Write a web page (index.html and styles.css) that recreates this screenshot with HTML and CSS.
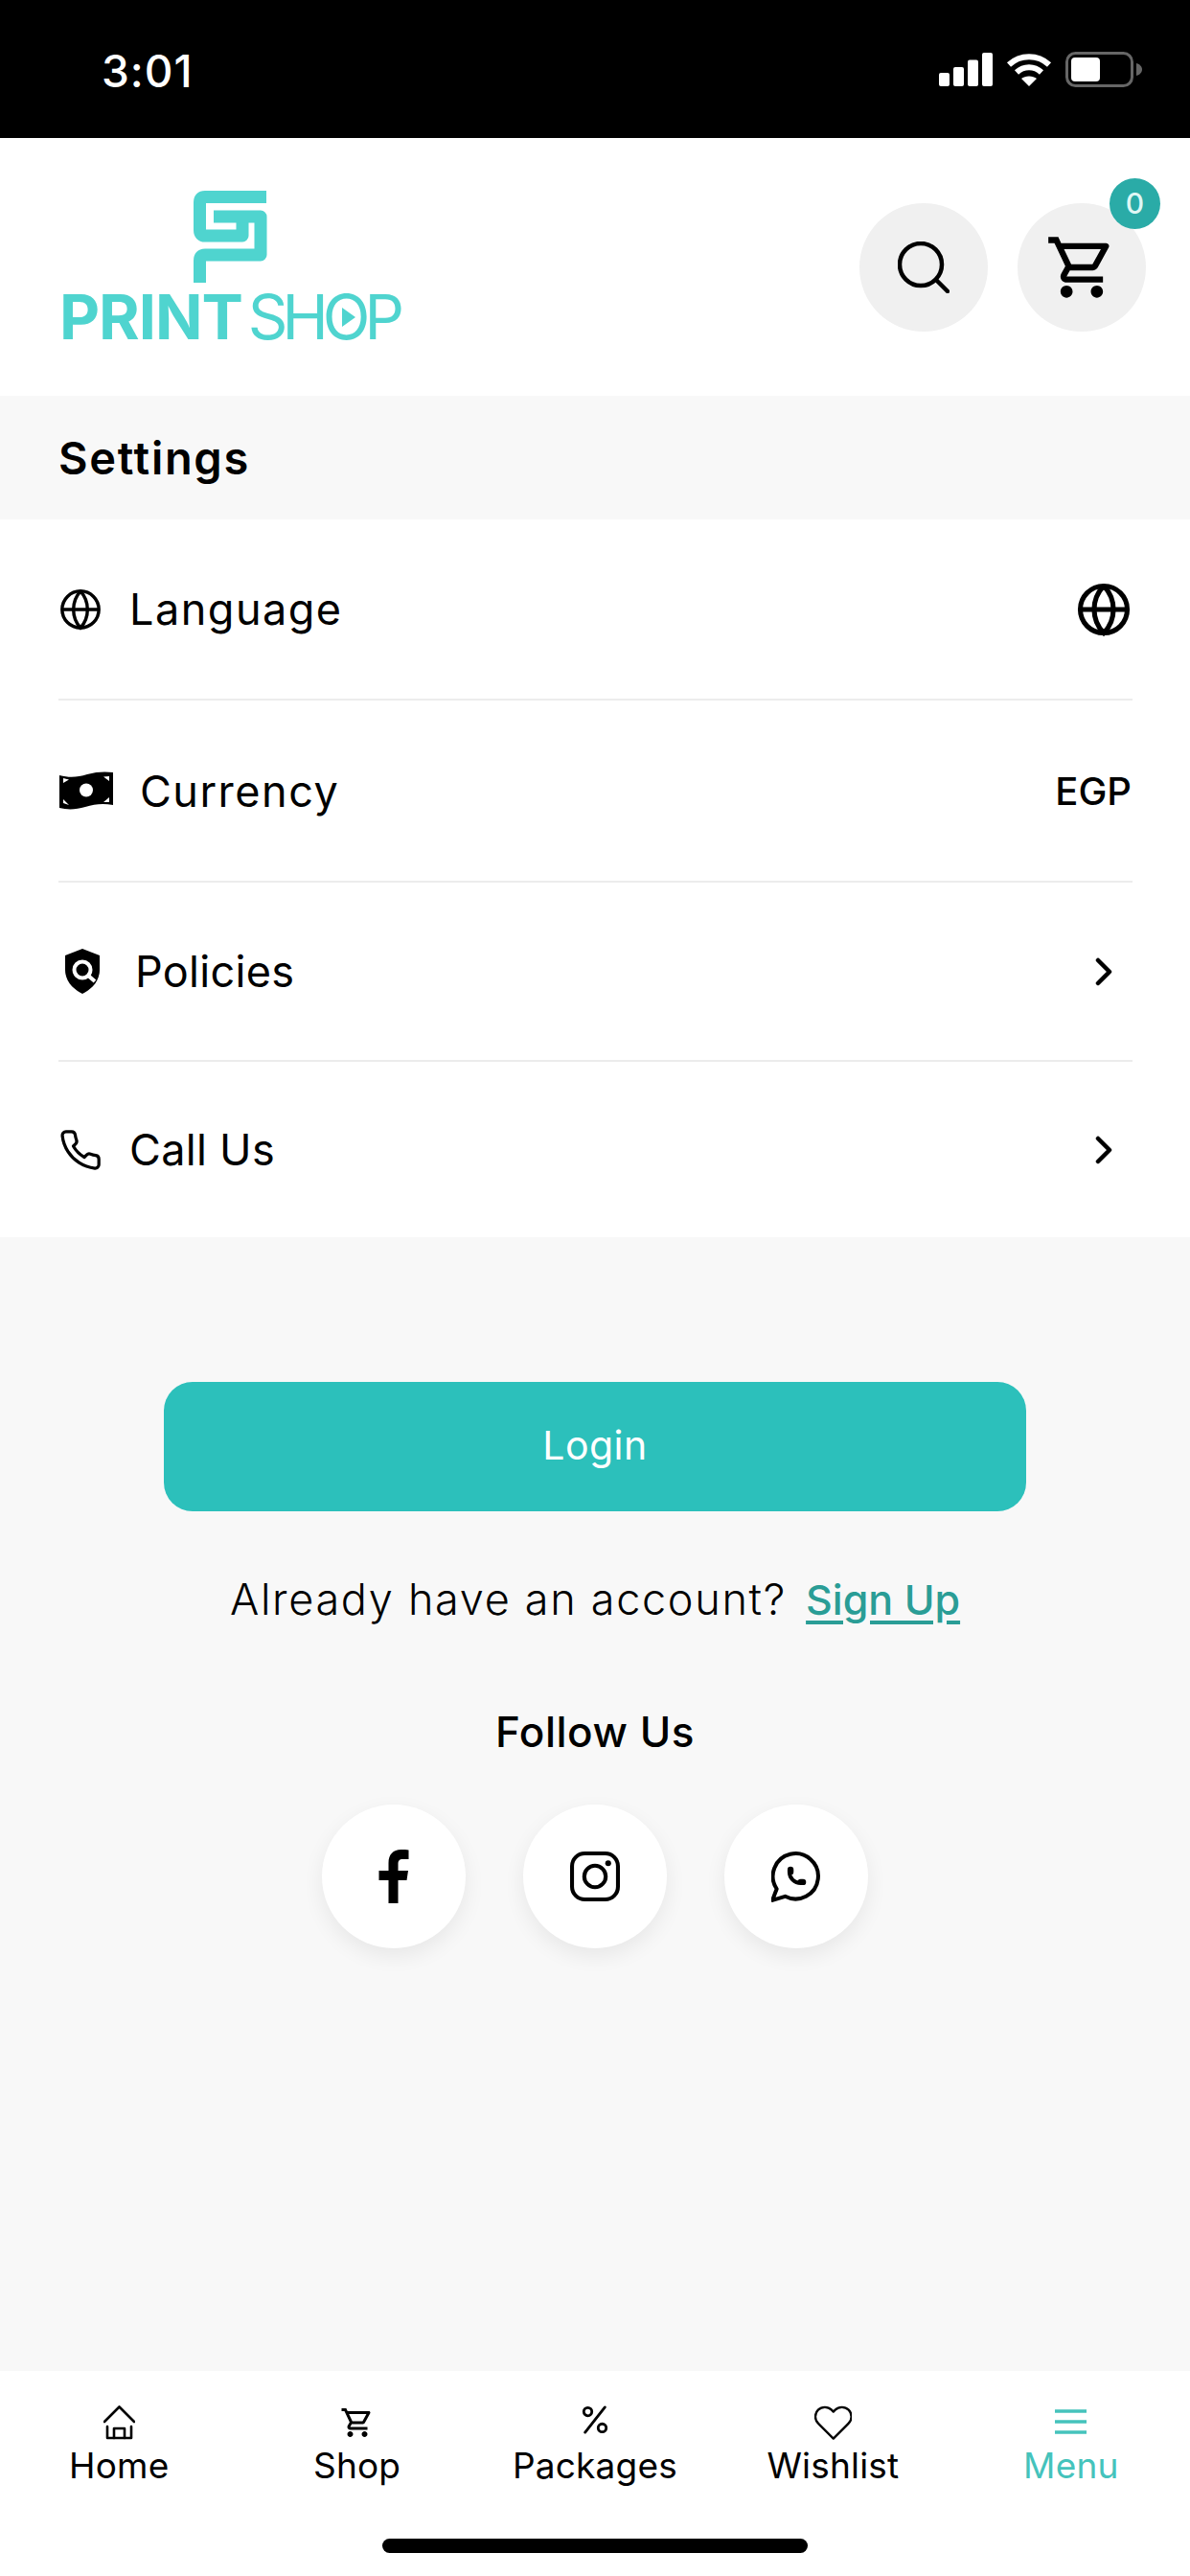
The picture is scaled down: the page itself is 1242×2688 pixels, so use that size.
FILE: index.html
```html
<!DOCTYPE html>
<html lang="en">
<head>
    <meta charset="UTF-8">
    <meta name="viewport" content="width=device-width, initial-scale=1.0">
    <title>Settings - Print Shop</title>
    <link rel="stylesheet" href="styles.css">
</head>
<body>
    <div class="status-bar">
        <span class="time">3:01</span>
        <div class="status-icons">
            <svg class="signal" viewBox="0 0 56 35" fill="#fff">
                <rect x="0" y="21" width="11" height="14" rx="2"/>
                <rect x="15" y="15" width="11" height="20" rx="2"/>
                <rect x="30" y="7.500" width="11" height="27.500" rx="2"/>
                <rect x="45" y="0" width="11" height="35" rx="2"/>
            </svg>
            <svg class="wifi" viewBox="0 0 48 35" fill="none" stroke="#fff" stroke-width="6">
                <path d="M3 12.500C15 1.500 33 1.500 45 12.500"/>
                <path d="M11 20.500C18.500 13.500 29.500 13.500 37 20.500"/>
                <path d="M24 35L16 27C20 23.500 28 23.500 32 27Z" fill="#fff" stroke="none"/>
            </svg>
            <svg class="battery" viewBox="0 0 80 37">
                <rect x="1.500" y="1.500" width="68" height="34" rx="9" fill="none" stroke="#666" stroke-width="3"/>
                <rect x="6" y="6" width="30" height="25" rx="4" fill="#fff"/>
                <path d="M74 12C78 13 80 16 80 18.500C80 21 78 24 74 25Z" fill="#666"/>
            </svg>
        </div>
    </div>

    <header class="header">
        <div class="logo">
            <svg class="logo-mark" viewBox="0 0 100 115" fill="none" stroke="#4fd4cf" stroke-width="13" stroke-linejoin="round">
                <path d="M88 16.500H24Q18.500 16.500 18.500 22V51Q18.500 57 24 57H63V37"/>
                <path d="M33 37H82V77H24Q18.500 77 18.500 83V106"/>
            </svg>
            <div class="logo-text">
                <span class="logo-print">PRINT</span>
                <span class="logo-shop">SH<span class="logo-o">O</span>P</span>
            </div>
        </div>
        <div class="header-actions">
            <button class="round-btn">
                <svg class="icon-search" viewBox="0 0 54 54" fill="none" stroke="#000" stroke-width="4.500" stroke-linecap="round">
                    <circle cx="24" cy="24" r="22"/>
                    <path d="M40 40L52 52"/>
                </svg>
            </button>
            <button class="round-btn cart-btn">
                <svg class="icon-cart" viewBox="0 0 24 24" fill="#000"><path d="M15.55 13c.75 0 1.41-.41 1.75-1.03l3.58-6.49c.37-.66-.11-1.48-.87-1.48H5.21l-.94-2H1v2h2l3.6 7.59-1.35 2.44C4.52 15.37 5.48 17 7 17h12v-2H7l1.100-2h7.450zM6.160 6h12.150l-2.760 5H8.530L6.160 6zM7 18c-1.100 0-1.990.9-1.990 2S5.900 22 7 22s2-.9 2-2-.9-2-2-2zm10 0c-1.100 0-1.990.9-1.990 2s.89 2 1.990 2 2-.9 2-2-.9-2-2-2z"/></svg>
                <span class="badge">0</span>
            </button>
        </div>
    </header>

    <div class="section-title">Settings</div>

    <div class="settings-list">
        <div class="row row-spaced">
            <div class="row-left">
                <svg class="icon-globe" viewBox="0 0 24 24" fill="none" stroke="#000" stroke-width="1.800">
                    <circle cx="12" cy="12" r="10"/>
                    <path d="M2 12h20"/>
                    <path d="M12 2a15 15 0 0 1 0 20a15 15 0 0 1 0-20"/>
                </svg>
                <span>Language</span>
            </div>
            <svg class="icon-globe-big" viewBox="0 0 24 24" fill="none" stroke="#000" stroke-width="2.200">
                <circle cx="12" cy="12" r="10.500"/>
                <path d="M2 12h20"/>
                <path d="M12 1.500a15 15 0 0 1 0 21a15 15 0 0 1 0-21"/>
            </svg>
        </div>
        <div class="row row-spaced">
            <div class="row-left">
                <svg class="icon-money" viewBox="0 0 58 40">
                    <path d="M1 4C12 7 20 6 30 3C40 0 50 0 57 1V35C46 33 38 34 28 37C18 40 9 40 1 38Z" fill="#000"/>
                    <circle cx="29" cy="19.500" r="7" fill="#fff"/>
                    <path d="M5 7L11 8.500L5 12ZM53 5L47 5.500L53 10ZM5 33L11 35L5 29ZM53 32L47 32L53 27Z" fill="#fff"/>
                </svg>
                <span>Currency</span>
            </div>
            <span class="row-value">EGP</span>
        </div>
        <div class="row">
            <div class="row-left">
                <svg class="icon-shield" viewBox="0 0 40 47">
                    <path d="M20 0L38 7V22C38 35 28 43 20 47C12 43 2 35 2 22V7Z" fill="#000"/>
                    <circle cx="20" cy="22" r="8.500" fill="none" stroke="#fff" stroke-width="4"/>
                    <path d="M26 28L33 34" stroke="#fff" stroke-width="4"/>
                </svg>
                <span>Policies</span>
            </div>
            <svg class="icon-chevron" viewBox="0 0 18 30" fill="none" stroke="#000" stroke-width="4.500" stroke-linecap="round" stroke-linejoin="round"><path d="M3 3L15 15L3 27"/></svg>
        </div>
        <div class="row">
            <div class="row-left">
                <svg class="icon-phone" viewBox="0 0 24 24" fill="none" stroke="#000" stroke-width="1.700" stroke-linejoin="round"><path d="M22 16.920v3a2 2 0 0 1-2.180 2 19.790 19.790 0 0 1-8.630-3.070 19.500 19.500 0 0 1-6-6 19.790 19.790 0 0 1-3.070-8.670A2 2 0 0 1 4.110 2h3a2 2 0 0 1 2 1.720 12.840 12.840 0 0 0 .7 2.810 2 2 0 0 1-.45 2.110L8.090 9.910a16 16 0 0 0 6 6l1.270-1.270a2 2 0 0 1 2.110-.45 12.840 12.840 0 0 0 2.810.7A2 2 0 0 1 22 16.920z"/></svg>
                <span>Call Us</span>
            </div>
            <svg class="icon-chevron" viewBox="0 0 18 30" fill="none" stroke="#000" stroke-width="4.500" stroke-linecap="round" stroke-linejoin="round"><path d="M3 3L15 15L3 27"/></svg>
        </div>
    </div>

    <main class="account">
        <button class="login-btn">Login</button>
        <p class="signup-line"><span class="signup-text">Already have an account?</span> <a class="signup-link" href="#">Sign Up</a></p>
        <h3 class="follow-title">Follow Us</h3>
        <div class="social-list">
            <a class="social-btn" href="#">
                <svg class="icon-social" viewBox="0 0 51 56" fill="#000"><path d="M20 56V32H10V22H20V14C20 5 25 0 33 0C36 0 39 0 41 .5V10H35C31 10 30 12 30 15V22H40.500L39 32H30V56Z"/></svg>
            </a>
            <a class="social-btn" href="#">
                <svg class="icon-social" viewBox="0 0 51 51" fill="none" stroke="#000" stroke-width="4">
                    <rect x="2" y="2" width="47" height="47" rx="13"/>
                    <circle cx="25.500" cy="25.500" r="11"/>
                    <circle cx="39" cy="12" r="3" fill="#000" stroke="none"/>
                </svg>
            </a>
            <a class="social-btn" href="#">
                <svg class="icon-social" viewBox="1 1 22 22" fill="none" stroke="#000" stroke-width="1.700" stroke-linecap="round" stroke-linejoin="round">
                    <path d="M1.500 22.500l1.900-5a10 10 0 1 1 3.700 3.300l-5.600 1.700"/>
                    <path d="M9 10a.5.5 0 0 0 1 0v-1a.5.5 0 0 0-1 0v1a5 5 0 0 0 5 5h1a.5.5 0 0 0 0-1h-1a.5.5 0 0 0 0 1"/>
                </svg>
            </a>
        </div>
    </main>

    <nav class="bottom-nav">
        <div class="nav-items">
            <a class="nav-item" href="#">
                <svg class="nav-icon" viewBox="0 0 33 36" fill="none" stroke="#000" stroke-width="2.600" stroke-linecap="round" stroke-linejoin="round">
                    <path d="M1 17L16.500 1.500L32 17"/>
                    <path d="M4 22V34H29V22"/>
                    <path d="M11 34V24H22V34"/>
                </svg>
                <span>Home</span>
            </a>
            <a class="nav-item" href="#">
                <svg class="nav-icon" viewBox="0 0 24 24" fill="#000"><path d="M15.550 13c.75 0 1.410-.41 1.750-1.030l3.580-6.490c.37-.66-.11-1.480-.87-1.480H5.210l-.94-2H1v2h2l3.600 7.590-1.350 2.440C4.520 15.370 5.480 17 7 17h12v-2H7l1.100-2h7.450zM6.160 6h12.150l-2.760 5H8.530L6.160 6zM7 18c-1.100 0-1.990.9-1.990 2S5.900 22 7 22s2-.9 2-2-.9-2-2-2zm10 0c-1.100 0-1.990.9-1.990 2s.89 2 1.990 2 2-.9 2-2-.9-2-2-2z"/></svg>
                <span>Shop</span>
            </a>
            <a class="nav-item" href="#">
                <svg class="nav-icon nav-icon-small" viewBox="0 0 32 32" fill="none" stroke="#000" stroke-width="3" stroke-linecap="round">
                    <circle cx="8" cy="7" r="4.500"/>
                    <circle cx="24" cy="25" r="4.500"/>
                    <path d="M27 2L5 30"/>
                </svg>
                <span>Packages</span>
            </a>
            <a class="nav-item" href="#">
                <svg class="nav-icon" viewBox="1 2 22 20" fill="none" stroke="#000" stroke-width="1.300" stroke-linejoin="round"><path d="M20.840 4.610a5.500 5.500 0 0 0-7.780 0L12 5.670l-1.060-1.060a5.500 5.500 0 0 0-7.780 7.780l1.060 1.060L12 21.230l7.780-7.780 1.060-1.060a5.500 5.500 0 0 0 0-7.780z"/></svg>
                <span>Wishlist</span>
            </a>
            <a class="nav-item active" href="#">
                <svg class="nav-icon" viewBox="0 0 33 36" fill="none" stroke="#45c3bc" stroke-width="3.500"><path d="M0 6H33M0 17H33M0 28H33"/></svg>
                <span>Menu</span>
            </a>
        </div>
        <div class="home-indicator"></div>
    </nav>
</body>
</html>
```

FILE: styles.css
```css
* {
    margin: 0;
    padding: 0;
    box-sizing: border-box;
}

body {
    font-family: Inter, 'Liberation Sans', sans-serif;
    background: #f8f8f8;
    color: #000;
    width: 1242px;
    height: 2688px;
    overflow: hidden;
    display: flex;
    flex-direction: column;
}

a {
    color: inherit;
    text-decoration: none;
}

button {
    border: none;
    font-family: inherit;
}

/* status bar */
.status-bar {
    height: 144px;
    background: #000;
    color: #fff;
    display: flex;
    align-items: center;
    justify-content: space-between;
    padding: 0 50px 0 106px;
    flex-shrink: 0;
}

.time {
    font-size: 46px;
    font-weight: 500;
    letter-spacing: 1px;
    padding-top: 3px;
}

.status-icons {
    display: flex;
    align-items: center;
    gap: 14px;
}

.signal {
    width: 56px;
    height: 35px;
}

.wifi {
    width: 48px;
    height: 35px;
}

.battery {
    width: 80px;
    height: 37px;
}

/* header */
.header {
    height: 269px;
    background: #fff;
    display: flex;
    align-items: center;
    justify-content: space-between;
    padding: 0 46px 0 62px;
    flex-shrink: 0;
}

.logo {
    display: flex;
    flex-direction: column;
    align-items: center;
    width: 354px;
    padding-bottom: 13px;
    color: #4fd4cf;
}

.logo-mark {
    width: 100px;
    height: 115px;
    margin-right: -2px;
}

.logo-text {
    display: flex;
    align-items: center;
    justify-content: space-between;
    width: 100%;
    font-size: 65px;
    line-height: 48px;
    margin-top: 3px;
    white-space: nowrap;
}

.logo-print {
    font-weight: 700;
    letter-spacing: -1px;
}

.logo-shop {
    font-weight: 400;
    letter-spacing: -6px;
}

.logo-o {
    position: relative;
    display: inline-block;
}

.logo-o::after {
    content: "";
    position: absolute;
    left: 20px;
    top: 14px;
    border-left: 14px solid #4fd4cf;
    border-top: 10px solid transparent;
    border-bottom: 10px solid transparent;
}

.header-actions {
    display: flex;
    gap: 31px;
}

.round-btn {
    width: 134px;
    height: 134px;
    border-radius: 50%;
    background: #f0f0f0;
    display: flex;
    align-items: center;
    justify-content: center;
    position: relative;
}

.icon-search {
    width: 54px;
    height: 54px;
}

.icon-cart {
    width: 76px;
    height: 76px;
}

.badge {
    position: absolute;
    top: -26px;
    right: -15px;
    width: 53px;
    height: 53px;
    border-radius: 50%;
    background: #2aaba7;
    color: #dff7f5;
    font-size: 30px;
    font-weight: 500;
    display: flex;
    align-items: center;
    justify-content: center;
}

/* settings list */
.section-title {
    height: 129px;
    display: flex;
    align-items: center;
    padding-left: 61px;
    font-size: 47px;
    font-weight: 600;
    letter-spacing: 1.700px;
    flex-shrink: 0;
}

.settings-list {
    background: #fff;
    padding: 0 60px 0 61px;
    flex-shrink: 0;
}

.row {
    display: flex;
    align-items: center;
    justify-content: space-between;
    height: 189px;
    border-bottom: 2px solid #ececec;
    font-size: 45px;
    letter-spacing: 0.300px;
}

.row-spaced {
    letter-spacing: 1.500px;
}

.row:nth-child(2) {
    height: 190px;
}

.row:nth-child(3) {
    height: 187px;
}

.row:last-child {
    height: 183px;
    border-bottom: none;
}

.row-left {
    display: flex;
    align-items: center;
}

.icon-globe {
    width: 46px;
    height: 46px;
    margin-right: 28px;
}

.icon-globe-big {
    width: 56px;
    height: 56px;
    margin-right: 2px;
}

.icon-money {
    width: 58px;
    height: 40px;
    margin-right: 27px;
}

.icon-shield {
    width: 40px;
    height: 47px;
    margin: 0 35px 0 5px;
}

.icon-phone {
    width: 46px;
    height: 46px;
    margin-right: 28px;
}

.icon-chevron {
    width: 18px;
    height: 30px;
    margin-right: 21px;
}

.row-value {
    font-size: 40px;
    font-weight: 500;
    letter-spacing: 0;
    margin-right: 1px;
}

/* login and social */
.account {
    flex: 1;
    display: flex;
    flex-direction: column;
    align-items: center;
}

.login-btn {
    width: 900px;
    height: 135px;
    margin-top: 151px;
    padding-bottom: 4px;
    border-radius: 30px;
    background: #2cc0bb;
    color: #fff;
    font-size: 41px;
    letter-spacing: 0.500px;
}

.signup-line {
    margin-top: 64px;
    font-size: 43px;
}

.signup-text {
    font-size: 45px;
    font-weight: 300;
    letter-spacing: 1.700px;
}

.signup-link {
    margin-left: 8px;
    color: #2a9d96;
    font-weight: 500;
    text-decoration: underline;
    text-underline-offset: 6px;
}

.follow-title {
    margin-top: 84px;
    font-size: 44px;
    font-weight: 500;
    letter-spacing: 0.500px;
}

.social-list {
    display: flex;
    gap: 60px;
    margin-top: 49px;
}

.social-btn {
    width: 150px;
    height: 150px;
    border-radius: 50%;
    background: #fff;
    box-shadow: 0 8px 22px rgba(0, 0, 0, 0.07);
    display: flex;
    align-items: center;
    justify-content: center;
}

.icon-social {
    width: 52px;
    height: 56px;
}

/* bottom nav */
.bottom-nav {
    height: 214px;
    background: #fff;
    display: flex;
    flex-direction: column;
    align-items: center;
    flex-shrink: 0;
}

.nav-items {
    display: grid;
    grid-template-columns: repeat(5, 1fr);
    width: 100%;
    padding-top: 36px;
}

.nav-item {
    display: flex;
    flex-direction: column;
    align-items: center;
    font-size: 37px;
    letter-spacing: 0.200px;
}

.nav-icon {
    height: 36px;
    margin-bottom: 4px;
}

.nav-icon-small {
    height: 30px;
    margin-bottom: 10px;
}

.nav-item.active {
    color: #45c3bc;
}

.home-indicator {
    width: 444px;
    height: 15px;
    border-radius: 8px;
    background: #000;
    margin-top: auto;
    margin-bottom: 24px;
}
```
